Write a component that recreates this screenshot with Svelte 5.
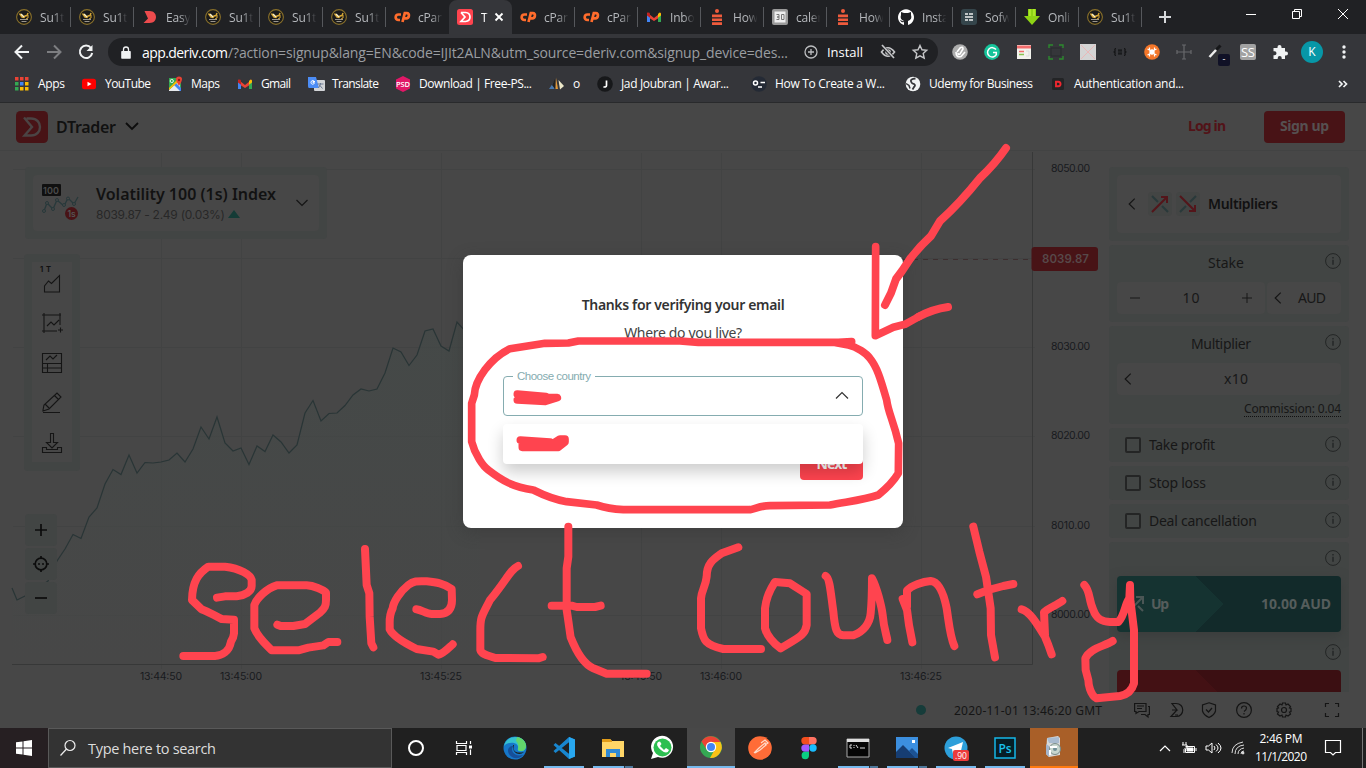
<script>
  // Spreads the letters of a label so that it runs exactly `width` pixels.
  function fit(node, width) {
    const natural = node.getBoundingClientRect().width;
    const count = node.textContent.trim().length;
    if (count > 1) node.style.letterSpacing = `${(width - natural) / (count - 1)}px`;
    node.style.width = `${width}px`;
  }

  const tabs = [
    ['coin', 'Su1t'], ['coin', 'Su1t'], ['easy', 'Easy'], ['coin', 'Su1t'], ['coin', 'Su1t'], ['coin', 'Su1t'],
    ['cp', 'cPan'], ['deriv', 'T'], ['cp', 'cPan'], ['cp', 'cPan'], ['gmail', 'Inbo'], ['how', 'How'],
    ['cal', 'caler'], ['how', 'How'], ['github', 'Insta'], ['sofw', 'Sofw'], ['down', 'Onli'], ['coin', 'Su1t']
  ];

  const bookmarks = [
    { icon: 'apps', text: 'Apps', w: 27, span: 67 },
    { icon: 'youtube', text: 'YouTube', w: 46, span: 86 },
    { icon: 'maps', text: 'Maps', w: 29, span: 70 },
    { icon: 'gmail', text: 'Gmail', w: 30, span: 71 },
    { icon: 'translate', text: 'Translate', w: 47, span: 87 },
    { icon: 'psd', text: 'Download | Free-PS...', w: 113, span: 154 },
    { icon: 'ai', text: 'o', w: 7, span: 48 },
    { icon: 'jad', text: 'Jad Joubran | Awar...', w: 108, span: 154 },
    { icon: 'face', text: 'How To Create a W...', w: 110, span: 154 },
    { icon: 'globe', text: 'Udemy for Business', w: 104, span: 145 },
    { icon: 'auth', text: 'Authentication and...', w: 110, span: 150 }
  ];

  const extensions = ['clip', 'grammar', 'news', 'frame', 'cross', 'braces', 'orange', 'ruler', 'pick', 'ss', 'puzzle'];

  const points = [
    [12, 588], [17, 600], [25, 596], [33, 592], [41, 586], [48, 581], [57, 561], [65, 549], [73, 534.5], [81, 538.5],
    [89, 517], [97, 508], [105, 484], [113, 469.5], [121, 474.5], [129, 455], [137, 473], [145, 462.5], [153, 463],
    [161, 462], [169, 460], [177, 453], [185, 462], [193, 449], [201, 427], [209, 439], [217, 417], [225, 443],
    [233, 451], [241, 448], [249, 464.5], [257, 446], [265, 451.5], [273, 435], [281, 442], [289, 453], [297, 445],
    [305, 413], [313, 400.5], [321, 421], [329, 413.5], [337, 413], [345, 405.5], [353, 395], [361, 389], [369, 391],
    [377, 389], [385, 373], [393, 348], [401, 352], [409, 365.5], [417, 355], [425, 331], [433, 329], [441, 346],
    [449, 351], [457, 322], [465, 331], [480, 340]
  ];
  const line = points.map(([x, y]) => `${x},${y - 103}`).join(' ');

  const priceLabels = [['8050.00', 66], ['8030.00', 244], ['8020.00', 333], ['8010.00', 423], ['8000.00', 512]];
  const timeLabels = [['13:44:50', 161], ['13:45:00', 241], ['13:45:25', 441], ['13:45:50', 641], ['13:46:00', 721], ['13:46:25', 921]];

  const options = [['Take profit', 66], ['Stop loss', 57], ['Deal cancellation', 108]];

  const apps = [
    ['edge', ''], ['vscode', 'run'], ['explorer', 'stacked'], ['whatsapp', ''], ['chrome', 'focused'], ['postman', ''],
    ['figma', ''], ['cmd', 'stacked'], ['photos', 'stacked'], ['telegram', 'run'], ['ps', 'run'], ['installer', 'alert']
  ];
</script>

{#snippet info()}
  <svg class="info" viewBox="0 0 16 16" width="16" height="16" fill="none" stroke="#232525">
    <circle cx="8" cy="8" r="7.4" /><path d="M8 6.8v5M8 4v1.5" stroke-width="1.4" />
  </svg>
{/snippet}

{#snippet left()}
  <svg width="8" height="12" viewBox="0 0 8 12" fill="none" stroke="#151515" stroke-width="1.2"><path d="M6.7.6 1.2 6l5.5 5.4" /></svg>
{/snippet}

{#snippet icon(name)}
  <svg viewBox="0 0 16 16" width="16" height="16" fill="none">
    {#if name === 'coin'}
      <circle cx="8" cy="8" r="7.4" fill="#1b1b1b" stroke="#89702a" stroke-width="1.1" />
      <path d="M3.500 4.500 6 8l2 .5 1-1.500 2-.5 1-2.500" stroke="#d7a735" stroke-width="1.500" /><path d="M4 10.500h8M5.500 12.500h5" stroke="#99958d" stroke-width="1.200" /><path d="m5 5 3 3" stroke="#fff2c5" stroke-width="1.500" /><path d="M12 6v3l-2 1" stroke="#d7a735" />
    {:else if name === 'easy'}
      <path d="M2.500 2h5C12 2 14 5 14 8s-2 6-6.500 6H1.500L6 9.500Z" fill="#ed4b4d" />
    {:else if name === 'cp'}
      <g stroke="#ff6c2c" stroke-width="2.700"><path d="M7 5.500H4.500C1 5.500 .500 11 4.500 11H6M8.500 13 10.800 4.200h2C16.300 4.200 15 9.400 12.500 9.400H10" /></g>
    {:else if name === 'deriv'}
      <rect width="16" height="16" rx="2.500" fill="#ff444f" /><path d="M4 3.500h4.500c6 .500 6 8.500 0 9H4L8 8 4 3.500" stroke="#fff" stroke-width="1.700" />
    {:else if name === 'gmail'}
      <path d="M1 3.500 8 9l7-5.500v4L8 12 1 7.500Z" fill="#ea4335" /><path d="M1 4.500V13h3V7Z" fill="#4285f4" /><path d="M15 4.500V13h-3V7Z" fill="#34a853" /><path d="m12 5 1.500-1.500q1.500 0 1.500 1.500v1.500l-3 2.300Z" fill="#fbbc04" /><path d="M1 5q0-2 2.500-1.200L4 4.500v4.300L1 6.500Z" fill="#c5221f" />
    {:else if name === 'how'}
      <circle cx="8" cy="2" r="2" fill="#ef5b3c" /><path d="M3 5.500h10v2.800H3zM3 9.400h10v2.700H3zM3 13.200h10V16H3z" fill="#ef5b3c" />
    {:else if name === 'cal'}
      <rect width="16" height="16" rx="2" fill="#9a9a9a" /><rect x="2.500" y="2.500" width="11" height="11" fill="#eee" /><path d="M4.500 5.500h2.500v2.500H5h2v2.500H4.500M9.500 5.500h2.500v5H9.500z" stroke="#777" />
    {:else if name === 'github'}
      <path d="M6 16v-3c-3 1-3-1-4-2 2 0 2 2 4 1-3-1-4-3-3-6V3l3 1h4l3-1v3c1 3 0 5-3 6v4a8 8 0 1 0-4 0Z" fill="#fff" />
    {:else if name === 'sofw'}
      <rect width="16" height="16" rx="3" fill="#35454b" /><path d="M4 5h3M8 5h4M4 8h8M4 11h3M8 11h4" stroke="#eee" stroke-width="1.400" />
    {:else if name === 'down'}
      <path d="M4 0h8v7h4l-8 9-8-9h4Z" fill="#8ed315" /><path d="M6 0v7M10 0v7" stroke="#cafa41" />
    {:else if name === 'apps'}
      {#each [1, 6, 11] as x, i}
        <path d="M{x} 1h3.500v3.500H{x}z" fill="#ea4335" /><path d="M{x} 6h3.500v3.500H{x}z" fill={['#34a853', '#4285f4', '#fbbc04'][i]} /><path d="M{x} 11h3.500v3.500H{x}z" fill={i === 0 ? '#34a853' : '#fbbc04'} />
      {/each}
    {:else if name === 'youtube'}
      <rect x="1" y="2.800" width="14" height="10.500" rx="2.500" fill="#f00" /><path d="m6.500 5.800 4 2.200-4 2.300Z" fill="#fff" />
    {:else if name === 'maps'}
      <path d="M2 2h12v13H2Z" fill="#34a853" /><path d="M2 14 13 4v11H2Z" fill="#e8eaed" /><path d="m7 9 2-2 5 5v3h-1Z" fill="#4285f4" /><path d="m2 12 8-8 2 1-10 9Z" fill="#fbbc04" /><circle cx="4.800" cy="5" r="1.600" stroke="#e8f5ec" /><path d="M12 10C8 4 8 .500 12 .500s4 3.500 0 9.500Z" fill="#ea4335" /><circle cx="12" cy="4" r="1.200" fill="#8c1c13" />
    {:else if name === 'translate'}
      <rect x="6" y="4" width="11" height="11" rx="1" fill="#d3d5d8" /><path d="M0 1h8l3 11H1Q0 12 0 10Z" fill="#4c8df6" /><path d="M7 5.500H5v1.200h1.500C6 9 3 8.500 3 6.500c0-2 2-2.500 3.300-1.300" stroke="#fff" /><path d="M9.500 8h6M12.500 7v1l-2 4M11.500 9l3 3.500" stroke="#6c7b93" />
    {:else if name === 'psd'}
      <path d="m8 0 7 3.500v9L8 16l-7-3.500v-9Z" fill="#e11767" /><text x="8" y="10.700" text-anchor="middle" font-family="Open Sans" font-weight="600" font-size="7.500" fill="#fff" textLength="14">PSD</text>
    {:else if name === 'ai'}
      <path d="M0 13 5.500 5v8Z" fill="#4978ad" /><path d="M6.500 13 7 1.500 9 13Z" fill="#e39a39" /><path d="m3 9 3-6v10Z" fill="#222" /><path d="m9.500 4 5.500 6-4 3.500Z" fill="#ece8c9" />
    {:else if name === 'jad'}
      <circle cx="8" cy="8" r="7.800" fill="#17181a" /><path d="M9.500 4.500v5q0 2-3 1.300" stroke="#fff" stroke-width="1.700" />
    {:else if name === 'face'}
      <circle cx="8" cy="8" r="7.800" fill="#242a35" /><circle cx="4.500" cy="7" r="2" stroke="#fff" stroke-width="1.500" /><path d="M9.500 6.500H14M7 11h4" stroke="#fff" stroke-width="1.600" />
    {:else if name === 'globe'}
      <circle cx="8" cy="8" r="7.300" fill="#f1f3f4" /><path d="M10.500 2.500Q5 3 6 5.500T9 8q2 1 0 3l-1.500 2.500" stroke="#35363a" stroke-width="1.800" /><path d="M1 7.500 4 9.500l1 3" stroke="#35363a" stroke-width="1.500" />
    {:else if name === 'auth'}
      <rect x="2" y="2" width="12" height="12" rx="1.500" fill="#232426" /><path d="M6 5.700h2.300C11.300 6 11.300 10 8.300 10.300H6Z" stroke="#ef2730" stroke-width="1.900" />
    {:else if name === 'clip'}
      <circle cx="8" cy="8" r="7.800" fill="#adadad" /><path d="m5 8 3-4q3-2 3 1L8 10q-2 1-2-1M4 8q0 6 5 4.500L13 8" stroke="#fff" stroke-width="1.600" />
    {:else if name === 'grammar'}
      <circle cx="8" cy="8" r="7.900" fill="#15c39a" /><path d="M12 5.500a4.700 4.700 0 1 0 .3 5.200V8.500H9" stroke="#fff" stroke-width="1.500" />
    {:else if name === 'news'}
      <path d="M1 1h14v14H1z" fill="#f3f3ed" /><path d="M1 3h14" stroke="#f36d6d" stroke-width="3" /><path d="M3 7.500h5" stroke="#f36d6d" stroke-width="1.500" /><path d="M3 10.500h5" stroke="#8ac450" stroke-width="1.500" /><path d="M10 7h3v5h-3" stroke="#ddd" />
    {:else if name === 'frame'}
      <path d="M1 4V1h4M11 1h4v3M1 12v3h4M11 15h4v-3" stroke="#2d8a2e" stroke-width="1.400" /><path d="M3 4h10v8H3z" stroke="#292b2c" />
    {:else if name === 'cross'}
      <path d="M0 0h16v16H0z" fill="#d4d4d4" /><path d="m1 1 14 14M15 1 1 15" stroke="#efb1b1" stroke-width=".8" />
    {:else if name === 'braces'}
      <path d="M4 4.500Q2.500 4.500 3 6.300T1.500 8Q3.500 8 3 9.700T4 11.500M12 4.500q1.500 0 1 1.800T14.500 8q-2 0-1.500 1.700t-1 1.800M6 6.200h4M6 8h4M6 9.800h4" stroke="#111213" stroke-width="1.200" />
    {:else if name === 'orange'}
      <circle cx="8" cy="8" r="7.800" fill="#f4772a" /><path d="m3.500 5 2 1 0-2.500M12.500 5l-2 1V3.500M3.500 11l2-1v2.500M12.500 11l-2-1v2.500" stroke="#fff" stroke-width="1.200" /><circle cx="8" cy="8" r="2.700" fill="#fff" />
    {:else if name === 'ruler'}
      <path d="M1 6v4M15 6v4M1 8h14M8 1v14M6 1h4M6 15h4" stroke="#68696c" stroke-width="1.200" />
    {:else if name === 'pick'}
      <path d="m1.500 13 6.500-7" stroke="#eee" stroke-width="2.500" /><path d="m8.500 5.500 4-4" stroke="#161719" stroke-width="3" />
    {:else if name === 'ss'}
      <rect width="16" height="16" rx="2" fill="#a2a2a2" /><text x="8" y="12.500" text-anchor="middle" font-family="Open Sans" font-size="13" fill="#fff" textLength="14">SS</text>
    {:else if name === 'puzzle'}
      <path d="M1.500 4h4V3a2 2 0 0 1 4 0v1h3.500v3.500h1a2 2 0 0 1 0 4h-1V15H9.700v-1a2 2 0 0 0-4 0v1H1.500v-3.700h1a2 2 0 0 0 0-4h-1Z" fill="#f1f3f4" />
    {/if}
  </svg>
{/snippet}

{#snippet app(name)}
  <svg viewBox="0 0 24 24" width="24" height="24" fill="none">
    {#if name === 'edge'}
      <circle cx="12" cy="12" r="11.500" fill="#1677c9" /><path d="M1 10C3-2 22-2 23 10c0 4-3 6-7 5-2-1-1-2-1-4 0-5-10-6-14-1Z" fill="#35c1d0" /><path d="M14 1c6 1 9 5 9 9 0 5-5 6-8 4 1-5 0-7-2-9Z" fill="#62d66b" /><path d="M10 10c-3 5 1 11 10 9-5 6-14 3-15-4 0-3 2-5 5-5Z" fill="#164f99" /><path d="M11 9c-2 6 2 9 10 7-4 4-12 2-11-7Z" fill="#1d2022" />
    {:else if name === 'vscode'}
      <path d="m17 1 6 2.500v17L17 23 1.500 9l2-2 15 12V5L3.500 17l-2-2Z" fill="#1886cf" /><path d="m17 1 6 2.500v17L17 23Z" fill="#28a7ef" />
    {:else if name === 'explorer'}
      <path d="M1 3h8l2 2h12v16H1Z" fill="#ffd667" /><path d="M1 3h8l2 2v1H1Z" fill="#e19c19" /><path d="M5 21v-8h14v8h-4v-4H9v4Z" fill="#318ad4" />
    {:else if name === 'whatsapp'}
      <path d="m1 23 2-6A11 11 0 1 1 8 21Z" fill="#fff" /><circle cx="12.500" cy="11.500" r="9" fill="#2cbf50" /><path d="M8 6q-3 3 3 8 6 5 8 0l-3-2-2 2-4-4 1.500-2L10 5.500Z" fill="#fff" />
    {:else if name === 'chrome'}
      <circle cx="12" cy="12" r="11" fill="#34a853" /><path d="M2.500 6.500A11 11 0 0 1 21.500 7H12L8 15Z" fill="#ea4335" /><path d="M21.500 7A11 11 0 0 1 11 23l5-9-3-7Z" fill="#fbc116" /><circle cx="12" cy="12" r="5.200" fill="#fff" /><circle cx="12" cy="12" r="4" fill="#4285f4" />
    {:else if name === 'postman'}
      <circle cx="12" cy="12" r="11.800" fill="#ff6c37" /><path d="m6 17 5-5 6-5 1 2-6 5-5 3M13 7l4-3 3 3-3 2" stroke="#ffdac9" stroke-width="1.200" />
    {:else if name === 'figma'}
      <path d="M12 1H8a3.700 3.700 0 0 0 0 7.400h4Z" fill="#f24e1e" /><path d="M12 1h4a3.700 3.700 0 0 1 0 7.400h-4Z" fill="#ff7262" /><path d="M12 8.400H8a3.700 3.700 0 0 0 0 7.400h4Z" fill="#a259ff" /><circle cx="16" cy="12" r="3.700" fill="#1abcfe" /><path d="M12 15.800H8a3.700 3.700 0 1 0 4 3.700Z" fill="#0acf83" />
    {:else if name === 'cmd'}
      <path d="M1 3h22v18H1z" fill="#050505" stroke="#aaa" /><path d="M1 4.500h22" stroke="#ddd" stroke-width="3" /><path d="M6 9H4v3h2M8 9v1M8 11v1M10 9l2 3M14 12h5" stroke="#ddd" />
    {:else if name === 'photos'}
      <path d="M1 1h22v21H1z" fill="#3c8fdf" /><path d="m1 16 7-7 13 13H1Z" fill="#163d72" /><path d="m14 15 3-3 6 6v4h-3Z" fill="#1c5292" /><path d="M17 4h3v3h-3z" fill="#fff" />
    {:else if name === 'telegram'}
      <circle cx="12" cy="12" r="11.500" fill="#2d9fda" /><path d="m4 12 15-6-3 13-5-4-2 3-1-5Z" fill="#fff" />
      <rect x="9" y="14" width="16" height="11" rx="2" fill="#ed3b3b" /><text x="17" y="22.500" text-anchor="middle" font-family="Open Sans" font-size="8.500" fill="#fff">.90</text>
    {:else if name === 'ps'}
      <path d="M2 2h20v20H2z" fill="#061e26" stroke="#14b7e7" stroke-width="1.500" /><text x="12" y="16.500" text-anchor="middle" font-family="Open Sans" font-weight="600" font-size="12" fill="#19c3ee" textLength="13">Ps</text>
    {:else if name === 'installer'}
      <path d="m5 3 11-2 2 2v17l-11 2-3-3Z" fill="#d8d9d8" /><path d="M5 3 17 2v6H7Z" fill="#a9bbcf" /><path d="m4 9 3 2v11l-3-3Z" fill="#a4b5cb" /><circle cx="13" cy="14" r="5.500" fill="#c8d7cf" stroke="#798c8a" /><circle cx="13" cy="14" r="2" fill="#718f97" /><path d="M8 12h7M8 15v5" stroke="#fff" stroke-width="2" />
    {/if}
  </svg>
{/snippet}

<div class="screen">
  <div class="tabs">
    {#each tabs as [name, text], i}
      <div class="tab" class:active={i === 7} class:bare={i === 6 || i === 7}>
        {@render icon(name)}
        <span class="tabtext">{text}</span>
        {#if i === 7}<svg class="x" width="10" height="10" stroke="#fff" stroke-width="1.800"><path d="m1.500 1.500 7 7M8.500 1.500l-7 7" /></svg>{/if}
      </div>
    {/each}
    <svg class="plus" width="14" height="14" stroke="#d5d7da" stroke-width="2"><path d="M7 1v12M1 7h12" /></svg>
    <div class="winbtns">
      <svg width="12" height="12" stroke="#fff" fill="none"><path d="M1 6.500h10" /></svg>
      <svg width="12" height="12" stroke="#fff" fill="none"><path d="M1.500 3.500h7v7h-7zM3.500 3.500v-2h7v7h-2" /></svg>
      <svg width="12" height="12" stroke="#fff" fill="none"><path d="m1 1 10 10M11 1 1 11" /></svg>
    </div>
  </div>

  <div class="toolbar">
    <div class="nav">
      <svg width="16" height="16" fill="none" stroke="#f1f3f4" stroke-width="2"><path d="M15 8H2M8 1.500 1.500 8 8 14.500" /></svg>
      <svg width="16" height="16" fill="none" stroke="#7d7e81" stroke-width="2"><path d="M1 8h13M8 1.500 14.500 8 8 14.500" /></svg>
      <svg width="16" height="16" fill="none" stroke="#f1f3f4" stroke-width="2"><path d="M13 4a6.200 6.200 0 1 0 1.200 5" /><path d="M14.500 1v6h-6Z" fill="#f1f3f4" stroke="none" /></svg>
    </div>
    <div class="url">
      <svg width="10" height="13" fill="#f1f3f4"><path d="M1 5h8q.8 0 .8.800V12q0 .8-.8.800H1q-.8 0-.8-.800V5.800Q.2 5 1 5Z" /><path d="M2.500 5V3.500a2.500 2.500 0 0 1 5 0V5" fill="none" stroke="#f1f3f4" stroke-width="1.300" /></svg>
      <span class="host" use:fit={86}>app.deriv.com</span><span class="path" use:fit={560}>/?action=signup&amp;lang=EN&amp;code=IJIt2ALN&amp;utm_source=deriv.com&amp;signup_device=des...</span>
      <svg class="inst" width="14" height="14" fill="none" stroke="#bcbec0" stroke-width="1.300"><circle cx="7" cy="7" r="6" /><path d="M7 4v6M4 7h6" /></svg>
      <span class="install" use:fit={36}>Install</span>
      <svg class="eye" width="16" height="14" fill="none" stroke="#c5c6c8" stroke-width="1.700"><path d="M1.500 7q6.500-8.500 13 0-6.500 8.500-13 0Z" /><circle cx="8" cy="7" r="2" fill="#c5c6c8" /><path d="m2 1 12 12" stroke="#202124" stroke-width="3" /><path d="m2 0 12 13" /></svg>
      <svg class="star" width="16" height="16" fill="none" stroke="#c5c6c8" stroke-width="1.400"><path d="m8 1.500 2 4.300 4.700.5-3.500 3.200 1 4.700L8 11.800l-4.200 2.400 1-4.700L1.300 6.300l4.700-.5Z" /></svg>
    </div>
    <div class="exts">
      {#each extensions as name}
        <div class="ext">{@render icon(name)}{#if name === 'pick'}<i class="badge">-</i>{/if}</div>
      {/each}
      <div class="ext"><span class="avatar">K</span></div>
      <div class="ext"><svg width="4" height="16" fill="#f1f3f4"><circle cx="2" cy="3" r="1.700" /><circle cx="2" cy="8" r="1.700" /><circle cx="2" cy="13" r="1.700" /></svg></div>
    </div>
  </div>

  <div class="bookmarks">
    {#each bookmarks as b}
      <div class="bm" style="width: {b.span}px">{@render icon(b.icon)}<span use:fit={b.w}>{b.text}</span></div>
    {/each}
    <svg class="more" width="10" height="8" fill="none" stroke="#f1f3f4" stroke-width="1.700"><path d="m1 1 3 3-3 3M5.500 1l3 3-3 3" /></svg>
  </div>

  <main>
    <header>
      <svg width="32" height="32" fill="none"><rect width="32" height="32" rx="4.500" fill="#481316" /><path d="M10.500 7.500H15c12 0 12 17 0 17H8.500l7.500-8.500L8 6.500" stroke="#4b4444" stroke-width="2.400" /></svg>
      <b class="brand" use:fit={60}>DTrader</b>
      <svg class="chev" width="14" height="9" fill="none" stroke="#0d0d0d" stroke-width="1.800"><path d="m1 1 6 6 6-6" /></svg>
      <b class="login" use:fit={38}>Log in</b>
      <div class="signup"><b use:fit={49}>Sign up</b></div>
    </header>

    <svg class="plot" width="1100" height="590" viewBox="0 0 1100 590">
      <defs><linearGradient id="area" x2="0" y2="1"><stop stop-color="#434a48" /><stop offset="1" stop-color="#474747" /></linearGradient></defs>
      <g stroke="#424343">
        {#each [66.500, 155.500, 244.500, 333.500, 423.500, 512.500] as y}<path d="M13 {y}H1035" />{/each}
        {#each timeLabels as [, x]}<path d="M{x + 0.500} 50V566" />{/each}
      </g>
      <polygon points="{line} 480,561 12,561" fill="url(#area)" opacity=".6" />
      <polyline points={line} fill="none" stroke="#293536" stroke-width="1.200" />
      <path d="M12 561.500H1032.500V49" fill="none" stroke="#373838" />
      <path d="M893 156.500H1032" stroke="#3d2e2f" stroke-dasharray="5 5" />
      <rect x="1031.500" y="144" width="66.500" height="24" rx="3" fill="#481316" />
      <g class="axis">
        {#each priceLabels as [t, y]}<text x="1051" y={y + 3} textLength="39">{t}</text>{/each}
        {#each timeLabels as [t, x]}<text x={x - 21} y="577" textLength="42">{t}</text>{/each}
        <text class="now" x="1042" y="160" textLength="47">8039.87</text>
      </g>
    </svg>

    <div class="market">
      <div class="marketcard">
        <svg width="40" height="40" fill="none">
          <rect width="19" height="12" x="1" y="1" rx="1" fill="#101010" /><text x="2" y="10.500" font-family="Inter" font-size="9" font-weight="600" fill="#4c4c4c" textLength="16">100</text>
          <path d="m3 28 3-8 6 6 4-9 7 6 4-8 6 6 4-7" stroke="#28393b" stroke-width="1.300" />
          <g fill="#474747" stroke="#28393b"><circle cx="3" cy="28" r="1.500" /><circle cx="6" cy="20" r="1.500" /><circle cx="12" cy="26" r="1.500" /><circle cx="16" cy="17" r="1.500" /><circle cx="23" cy="22" r="1.500" /><circle cx="27" cy="15.500" r="1.500" /><circle cx="33" cy="21" r="1.500" /></g>
          <circle cx="30.500" cy="30.500" r="6.500" fill="#481316" /><text x="26.500" y="33.800" font-family="Inter" font-size="8.500" font-weight="600" fill="#555">1s</text>
        </svg>
        <div class="mtext"><b use:fit={180}>Volatility 100 (1s) Index</b><div class="sub"><span use:fit={129}>8039.87 - 2.49 (0.03%)</span><i></i></div></div>
        <svg width="12" height="8" fill="none" stroke="#151515" stroke-width="1.200"><path d="m.5 1 5.500 5.500L11.500 1" /></svg>
      </div>
    </div>

    <div class="tools">
      <div class="toolcard">
        <svg viewBox="0 0 22 28" width="22" height="28"><text x="0" y="7" font-family="Inter" font-size="7.500" font-weight="700" fill="#111" textLength="11">1 T</text><path d="M4.500 27V21l4-5 3 2.500 8-8V27Z" /></svg>
        <svg width="22" height="22"><path d="M1 3h19M3 1v20M1 19h15M19 1v12M6 14l4-4 3 3 5-5M17 18h5M19.500 15.500v5" /></svg>
        <svg width="22" height="22"><path d="M1.500 1.500h19v19h-19zM1.500 11.500h19M1.500 16h19M6.500 12v8M5 8l4-4 3 3 4-4" /></svg>
        <svg width="22" height="22"><path d="M2 20.500h17M2 18l1-5L16 1l4 4L8 17l-6 2ZM13.500 3.500l4 4M4 12l4 4" /></svg>
        <svg width="22" height="22"><path d="M9.500 1.500h3v9h4L11 16l-5.500-5.500h4ZM1.500 15.500h4v2h11v-2h4v5h-19Z" /></svg>
      </div>
    </div>

    <div class="zooms">
      <div><svg width="14" height="14"><path d="M7 1v12M1 7h12" /></svg></div>
      <div><svg width="16" height="16"><circle cx="8" cy="8" r="5.800" /><path d="M8 0v3M8 13v3M0 8h3M13 8h3M5 8h2M9 8h2" /></svg></div>
      <div><svg width="14" height="14"><path d="M1 7h12" /></svg></div>
    </div>

    <aside>
      <section class="s1"><div class="card trade">
        {@render left()}
        <svg class="mx first" width="24" height="24" fill="none" stroke-width="2"><path d="m4 4 6 6M14 14l6 6" stroke="#29393a" /><path d="M4 20 18 6M13 5h6v6" stroke="#53151a" /></svg>
        <svg class="mx" width="24" height="24" fill="none" stroke-width="2"><path d="m20 4-6 6M10 14l-6 6" stroke="#29393a" /><path d="m4 4 14 14M13 19h6v-6" stroke="#53151a" /></svg>
        <b use:fit={70}>Multipliers</b>
      </div></section>
      <section class="s2">
        <div class="label"><span use:fit={36}>Stake</span>{@render info()}</div>
        <div class="row"><div class="card stake"><svg width="12" height="12" stroke="#181818"><path d="M1 6h10" /></svg><span use:fit={17}>10</span><svg width="12" height="12" stroke="#181818"><path d="M1 6h10M6 1v10" /></svg></div><div class="card cur">{@render left()}<span use:fit={28}>AUD</span></div></div>
      </section>
      <section class="s3">
        <div class="label"><span class="ml" use:fit={60}>Multiplier</span>{@render info()}</div>
        <div class="card times">{@render left()}<span use:fit={24}>x10</span></div>
        <div class="comm"><span use:fit={97}>Commission: 0.04</span></div>
      </section>
      {#each options as [t, w]}<section class="opt"><i></i><span use:fit={w}>{t}</span>{@render info()}</section>{/each}
      <section class="buy">
        <div class="ir">{@render info()}</div>
        <div class="btn up"><svg width="18" height="18" fill="none" stroke="#4b5655" stroke-width="2"><path d="m2 2 5 5M11 11l5 5M2 16 15 3M9 2h7v7" /></svg><b use:fit={18}>Up</b><b class="amt" use:fit={70}>10.00 AUD</b></div>
        <div class="ir two">{@render info()}</div>
        <div class="btn down"><svg width="18" height="18" fill="none" stroke="#554747" stroke-width="2"><path d="m16 2-5 5M2 2l13 13" /></svg></div>
      </section>
    </aside>

    <footer>
      <i class="dot"></i><span class="date" use:fit={148}>2020-11-01 13:46:20 GMT</span>
      <svg class="f1" width="16" height="16"><path d="M1 1.500h11v8H5l-3 2v-2H.6v-8ZM3 4h7M3 6.500h5M14 4.500h1.400v8H14v2.500l-3-2.500H7" /></svg>
      <svg class="f2" width="14" height="16"><path d="M2 1.500h4c9 0 9 13 0 13H1l6-6.500Z M3 3l4 5h-5M5 13h3" /></svg>
      <svg class="f3" width="16" height="16"><path d="M8 .8 14.500 3v6q-1 4-6.500 6.500Q2.500 13 1.500 9V3Z" /><path d="m5 7.500 2.500 2.500L11 6" /></svg>
      <svg class="f4" width="16" height="16"><circle cx="8" cy="8" r="7.400" /><path d="M5.500 6.500q0-2.500 2.500-2.500t2.500 2T8 9.500M8 11v1.500" /></svg>
      <svg class="f5" width="16" height="16"><path d="m6.500 1h3l.5 2 2-1 2.500 2.500-1 1.500 1.500.5v3l-1.500.5 1 2L12 14l-2-1-.5 2h-3L6 13l-2 1-2.500-2 1-2L1 9.500v-3L2.500 6l-1-1.500L4 2l2 1Z" /><circle cx="8" cy="8" r="2.500" /></svg>
      <svg class="f6" width="16" height="16"><path d="M1.500 5V1.500H5M11 1.500h3.500V5M1.500 11v3.500H5M11 14.500h3.500V11" /></svg>
    </footer>

    <div class="modal">
      <h1><span use:fit={203}>Thanks for verifying your email</span></h1>
      <p><span use:fit={118}>Where do you live?</span></p>
      <div class="field">
        <span class="legend"><span use:fit={74}>Choose country</span></span>
        <svg width="14" height="9" fill="none" stroke="#333" stroke-width="1.200"><path d="m1 7.500 6-6 6 6" /></svg>
      </div>
      <div class="next"><b use:fit={31}>Next</b></div>
      <div class="list"></div>
    </div>
  </main>

  <div class="taskbar">
    <div class="start"><svg width="16" height="16" fill="#fff"><path d="M0 2.300 6.500 1.400V7.500H0ZM7.500 1.200 16 0v7.500H7.500ZM0 8.500h6.500v6.100L0 13.700ZM7.500 8.500H16V16l-8.500-1.200Z" /></svg></div>
    <div class="search"><svg width="18" height="18" fill="none" stroke="#eee" stroke-width="1.200"><circle cx="11" cy="6.500" r="5" /><path d="M7.500 10 1.500 16.500" /></svg><span use:fit={128}>Type here to search</span></div>
    <div class="sys"><svg width="18" height="18" fill="none" stroke="#fff" stroke-width="2"><circle cx="9" cy="9" r="7" /></svg></div>
    <div class="sys"><svg width="18" height="18" fill="none" stroke="#fff" stroke-width="1.200"><path d="M1.500 2v2.500h10V2M1.500 16v-2.500h10V16M2 6.500h9v5H2zM15.500 2v3M15.500 10.500V16" /><path d="M14 6.500h3v3h-3z" fill="#fff" stroke="none" /></svg></div>
    <div class="apps">
      {#each apps as [name, state]}<div class="app {state}">{@render app(name)}</div>{/each}
    </div>
    <div class="tray">
      <svg class="t1" width="12" height="8" fill="none" stroke="#fff" stroke-width="1.200"><path d="m1 7 5-5 5 5" /></svg>
      <svg class="t2" width="16" height="14" fill="none" stroke="#fff"><path d="M4.500 5.500h9v6h-9V8M15 7v3M2 1v3M5 1v3M1 4h5v3H4.500L3 8.500V12" /><path d="M6 7h6v3H6z" fill="#fff" /></svg>
      <svg class="t3" width="17" height="14" fill="none" stroke="#fff"><path d="M1 5h2.500L7 2v10L3.500 9H1ZM9 5q2 2 0 4M11 3.500q4 3.500 0 7M13 2q6 5 0 10" /></svg>
      <svg class="t4" width="14" height="14" fill="none" stroke="#ddd"><path d="M1 12Q1 3 12 1M4 13Q4 5 13 4M7 13q0-5 6-6M10 13q0-3 3-3" /><circle cx="12" cy="12" r="1" fill="#fff" /></svg>
      <div class="clock"><span use:fit={43}>2:46 PM</span><span use:fit={52}>11/1/2020</span></div>
      <svg class="t5" width="18" height="18" fill="none" stroke="#fff" stroke-width="1.200"><path d="M1.500 1.500h15v12h-5L9 16l-2.500-2.500h-5Z" /></svg>
      <i></i>
    </div>
  </div>

  <svg class="ink" width="1366" height="768" fill="none" stroke="#ff444f" stroke-linecap="round" stroke-linejoin="round">
    <g transform="translate(160 520) scale(.33333)" stroke-width="24">
      <path d="M171 233L195 229H230C255 226 275 214 275 198V180C272 164 240 145 195 140H145C115 160 97 185 96 240L125 268C145 274 165 288 185 297L222 299V340C221 350 218 358 213 365C208 395 185 407 165 408H70" />
      <path d="M352 314L362 318H400L435 312L480 278C495 264 498 258 498 240V218C490 209 460 197 440 196H350C320 205 290 235 283 255V325C295 355 320 375 335 391H415L445 383L490 376L505 366H532" />
      <path d="M615 87L620 195L628 220L629 290L634 370L640 382" />
      <path d="M769 268C785 270 800 282 815 282H840C868 280 876 262 876 240L875 207C850 190 830 187 800 184C770 183 760 183 745 195C720 215 700 245 698 265C685 290 690 300 689 328C700 350 745 375 770 387L820 395L835 404C850 402 865 385 878 373" />
      <path d="M1074 138C1050 150 1040 180 990 240C965 290 961 290 961 330V390C965 405 990 407 1005 414L1135 415L1148 411" />
      <path d="M1225 20V110L1220 145V270C1225 300 1230 340 1232 352C1245 385 1265 430 1300 445L1340 461H1460M1175 257H1235L1250 261H1305L1322 257" />
    </g>
    <g transform="translate(660 520) scale(.33333)" stroke-width="24">
      <path d="M235 82L185 100C160 118 140 130 140 170C137 200 125 210 123 235V325C130 360 135 375 190 387H303" />
      <path d="M345 186L390 190L440 222V315C435 345 420 350 362 385C340 370 320 345 315 325V265C320 220 340 195 345 186Z" />
      <path d="M497 168C510 175 512 220 520 275C525 330 530 345 550 346H580C610 335 630 310 632 280C636 240 636 190 636 175C650 200 665 260 668 285C672 330 680 345 682 360" />
      <path d="M728 237L741 270L747 315L757 367M741 260V212C755 195 790 185 812 183C835 185 850 215 860 265C867 310 870 350 883 378" />
      <path d="M940 20L958 95L978 170L992 265L993 345L1005 412M952 223L985 210L1030 198L1060 192" />
      <path d="M1085 268C1110 275 1130 310 1155 350L1165 375L1175 403M1155 345L1152 277C1160 268 1190 255 1207 243" />
      <path d="M1273 195C1292 215 1285 240 1300 270C1310 300 1330 305 1350 306H1375C1395 285 1395 250 1408 235L1410 195L1411 240L1422 330V490C1415 515 1395 525 1380 528L1310 535C1290 525 1285 490 1285 480L1277 450L1276 415C1290 385 1330 380 1358 363" />
    </g>
    <g transform="translate(450 240) scale(.33333)" stroke-width="23">
      <path d="M1205 305L1165 307H745L690 303H385L355 309L285 310L180 326C120 355 75 420 73 465L65 490V605C75 645 100 680 115 690C160 725 190 740 250 750C290 770 320 780 350 785L440 795C470 805 500 808 520 809H900C920 805 930 797 960 797L1140 795C1190 785 1240 780 1285 765C1310 745 1330 725 1345 700L1346 610C1330 540 1315 520 1310 480C1290 410 1280 380 1260 355C1250 340 1220 320 1195 315L1150 307" />
      <path d="M1277 20L1276 287L1330 262L1365 253L1410 228" />
      <path d="M202 462L288 470 202 480 286 484 322 473H285" />
      <path d="M211 600L300 606H217L217 622H325L345 606V597H330L310 610 250 617" />
    </g>
    <path stroke-width="8" d="M1006 148Q995 164 980 178Q960 203 940 221L931 236Q919 247 910 259L902 271L896 279L891 293L885 305M918 317Q933 309 948 307" />
  </svg>
</div>

<style>
  :global(body) { background: #474747; overflow: hidden; }
  * { box-sizing: border-box; }
  .screen { position: relative; width: 1366px; height: 768px; display: flex; flex-direction: column; overflow: hidden; font-family: 'Open Sans', sans-serif; font-size: 12px; }
  span, b { display: inline-block; white-space: nowrap; flex: none; }
  svg { display: block; flex: none; overflow: visible; }

  .tabs { height: 34px; flex: none; background: #202124; display: flex; align-items: center; padding-left: 8px; }
  .tab { width: 63px; height: 34px; display: flex; align-items: center; padding-left: 8px; gap: 8px; position: relative; flex: none; }
  .tab::after { content: ''; position: absolute; right: 0; top: 7px; height: 20px; border-right: 1px solid #56585c; }
  .bare::after { display: none; }
  .tabtext { width: 25px; overflow: hidden; color: #b5b8bc; letter-spacing: -0.2px; -webkit-mask: linear-gradient(90deg, #000 55%, transparent 98%); }
  .active { background: #35363a; border-radius: 8px 8px 0 0; }
  .active .tabtext { width: 8px; color: #fff; }
  .x { margin-left: -3px; }
  .plus { margin-left: 16px; }
  .winbtns { margin-left: auto; display: flex; gap: 34px; padding-right: 17px; margin-top: -6px; }

  .toolbar { height: 36px; flex: none; background: #35363a; display: flex; align-items: center; }
  .nav { width: 108px; display: flex; padding-left: 14px; gap: 16px; }
  .url { width: 830px; height: 28px; border-radius: 14px; background: #202124; display: flex; align-items: center; padding-left: 13px; font-size: 14px; }
  .host { margin-left: 11px; color: #fff; }
  .path { color: #9a9da1; }
  .inst { margin-left: 16px; }
  .install { margin-left: 9px; font-size: 13px; color: #fff; }
  .eye { margin-left: 17px; }
  .star { margin-left: 16px; }
  .exts { display: flex; margin-left: 6px; }
  .ext { width: 32px; height: 24px; display: flex; align-items: center; justify-content: center; position: relative; }
  .badge { position: absolute; left: 18px; top: 14px; width: 12px; height: 12px; border-radius: 2px; background: #101126; color: #fff; font: 9px/10px 'Open Sans'; text-align: center; }
  .avatar { width: 22px; height: 22px; border-radius: 50%; background: #0797a7; color: #fff; text-align: center; line-height: 22px; font-size: 12px; }
  .bookmarks { height: 33px; flex: none; background: #35363a; border-bottom: 1px solid #292a2c; display: flex; align-items: center; padding: 0 18px 5px 14px; color: #fff; }
  .bm { display: flex; gap: 8px; align-items: center; flex: none; }
  .more { margin-left: auto; }

  main { position: relative; height: 625px; flex: none; background: #474747; color: #171717; display: flex; flex-direction: column; font-family: 'Noto Sans', sans-serif; font-size: 14px; }
  header { height: 48px; flex: none; border-bottom: 1px solid #424343; display: flex; align-items: center; padding: 0 21px 0 16px; }
  .brand { margin-left: 8px; font-size: 16px; font-weight: 600; color: #111; }
  .chev { margin-left: 9px; }
  .login { margin-left: auto; color: #521318; font-weight: 700; padding-bottom: 2px; }
  .signup { margin-left: 38px; width: 81px; height: 32px; border-radius: 4px; background: #481316; color: #565051; display: flex; align-items: center; justify-content: center; padding-bottom: 2px; }
  .plot { position: absolute; left: 0; top: 0; }
  .axis { font: 10.500px Inter, sans-serif; fill: #181a1e; }
  .axis .now { font-size: 11.500px; font-weight: 600; fill: #57494a; }

  .market { position: absolute; left: 25px; top: 64px; width: 302px; height: 72px; background: #424544; border-radius: 4px; padding: 8px; }
  .marketcard { height: 56px; border-radius: 4px; background: #474747; display: flex; align-items: center; padding: 0 11px 0 8px; }
  .mtext { margin-left: 15px; width: 200px; display: flex; flex-direction: column; align-items: flex-start; gap: 1px; }
  .mtext b { font-size: 16px; line-height: 21px; color: #121212; font-weight: 600; }
  .sub { display: flex; align-items: center; gap: 3px; font: 12px/17px Inter, sans-serif; color: #282828; }
  .sub i { border: 6px solid transparent; border-top: 0; border-bottom: 8px solid #143b36; }
  .tools { position: absolute; left: 24px; top: 151px; width: 56px; height: 217px; background: #424544; border-radius: 4px; padding: 8px; }
  .toolcard { height: 200px; background: #474747; display: flex; flex-direction: column; align-items: center; padding-top: 3px; gap: 18px; }
  .toolcard svg { fill: none; stroke: #151515; stroke-width: 1.100; }
  .toolcard svg:first-child { margin-bottom: 1px; margin-left: -3px; }
  .toolcard text { fill: #111; stroke: none; }
  .zooms { position: absolute; left: 25px; top: 411px; display: flex; flex-direction: column; gap: 2px; }
  .zooms div { width: 32px; height: 32px; border-radius: 4px; background: #424544; display: flex; align-items: center; justify-content: center; }
  .zooms svg { fill: none; stroke: #0c0c0c; stroke-width: 1.700; }

  aside { width: 240px; height: 525px; margin: 16px 0 0 1109px; overflow: hidden; display: flex; flex-direction: column; gap: 4px; flex: none; z-index: 1; }
  section { background: #424544; border-radius: 4px; flex: none; padding: 8px; position: relative; }
  section span, section b { padding-bottom: 2px; }
  .card { background: #474747; border-radius: 4px; display: flex; align-items: center; }
  .s1 { height: 74px; }
  .trade { height: 58px; padding-left: 11px; }
  .mx { background: #434544; border-radius: 4px; }
  .first { margin: 0 4px 0 12px; }
  .trade b { margin-left: 8px; font-weight: 600; color: #111; }
  .s2 { height: 77px; }
  .label { display: flex; justify-content: center; align-items: center; height: 21px; padding-right: 6px; position: relative; }
  .label .ml { margin-left: -10px; }
  .label :global(.info) { position: absolute; right: 0; top: 0; }
  .row { display: flex; gap: 2px; margin-top: 8px; }
  .stake { width: 148px; height: 32px; padding: 0 12px; justify-content: space-between; }
  .cur { width: 74px; padding-left: 7px; gap: 16px; }
  .s3 { height: 98px; }
  .times { height: 32px; margin-top: 8px; padding-left: 7px; gap: 92px; }
  .comm { text-align: right; font-size: 12px; line-height: 15px; margin-top: 6px; height: 16px; }
  .comm span { border-bottom: 1px dotted #111; text-align: left; height: 16px; padding: 0; }
  .opt { height: 34px; display: flex; align-items: center; padding: 0 8px 0 16px; }
  .opt i { width: 16px; height: 16px; border: 2px solid #242525; border-radius: 2px; margin-right: 8px; }
  .opt :global(.info) { margin-left: auto; margin-top: -2px; }
  .buy { height: 160px; padding-top: 8px; }
  .ir { display: flex; justify-content: flex-end; height: 26px; }
  .two { padding-top: 12px; height: 38px; }
  .btn { height: 56px; border-radius: 4px; display: flex; align-items: center; padding: 0 10px; color: #555d5c; gap: 6px; }
  .up { background: linear-gradient(#153331, #153331) 0 0 / 79px 100% no-repeat, linear-gradient(to top right, #153331 49.500%, transparent 50%) 79px 100% / 28px 28px no-repeat, linear-gradient(to bottom right, #153331 49.500%, transparent 50%) 79px 100% / 28px 28px no-repeat, #122a2a; background-position: 0 0, 79px 0, 79px 28px; box-shadow: 0 4px 12px #3a3d3c; }
  .down { background: linear-gradient(to top right, #431114 49.500%, #3b0f12 50%) 79px 0 / 28px 28px no-repeat, linear-gradient(90deg, #431114 79px, #3b0f12 79px); }
  .down svg { margin-top: 8px; }
  .amt { margin-left: auto; }

  footer { height: 36px; flex: none; display: flex; align-items: center; padding-left: 916px; font-size: 12px; color: #151515; }
  footer svg { fill: none; stroke: #151515; stroke-width: 1.200; }
  .dot { width: 10px; height: 10px; border-radius: 50%; background: #163c3a; margin-right: 28px; }
  .f1 { margin-left: 32px; } .f2 { margin-left: 20px; } .f3 { margin-left: 17px; } .f4 { margin-left: 19px; } .f5 { margin-left: 24px; } .f6 { margin-left: 32px; }

  .modal { position: absolute; z-index: 2; left: 463px; top: 152px; width: 440px; height: 273px; border-radius: 8px; background: #fff; box-shadow: 0 4px 16px #3336; padding: 39px 40px 40px; }
  h1 { margin: 0; font-size: 14px; line-height: 21px; font-weight: 600; text-align: center; color: #333; }
  p { margin: 7px 0 0; font-size: 14px; line-height: 21px; text-align: center; color: #444; }
  .field { height: 40px; margin-top: 33px; border: 1px solid #85acb0; border-radius: 4px; position: relative; display: flex; align-items: center; justify-content: flex-end; padding: 0 13px 2px; }
  .legend { position: absolute; left: 9px; top: -8px; background: #fff; padding: 0 4px; font: 11.500px/14px 'Liberation Sans', sans-serif; color: #85acb0; }
  .next { position: absolute; right: 40px; top: 193px; width: 63px; height: 32px; border-radius: 4px; background: #ff444f; color: #fff; text-align: center; line-height: 32px; }
  .list { position: absolute; left: 40px; top: 169px; width: 360px; height: 40px; background: #fff; border-radius: 4px; box-shadow: 0 8px 16px #0003; }

  .taskbar { height: 40px; flex: none; background: #202020; display: flex; align-items: stretch; color: #fff; }
  .start { width: 48px; background: #261f22; display: flex; align-items: center; justify-content: center; }
  .search { width: 344px; border: 1px solid #595959; background: #333; display: flex; align-items: center; padding-left: 10px; gap: 11px; font-size: 14.500px; color: #ddd; }
  .sys { width: 48px; display: flex; align-items: center; justify-content: center; }
  .apps { display: flex; margin-left: 3px; gap: 1px; }
  .app { width: 48px; display: flex; align-items: center; justify-content: center; position: relative; }
  .run::after, .stacked::after { content: ''; position: absolute; left: 4px; right: 4px; bottom: 0; height: 2px; background: #76b9ed; }
  .stacked::after { background: linear-gradient(90deg, #76b9ed 31px, #27303a 31px 32px, #4e789b 32px); }
  .focused { background: #484848; border-bottom: 2px solid #76b9ed; }
  .alert { background: #a95f28; border-bottom: 2px solid #ff7a0f; }
  .tray { margin-left: auto; width: 207px; display: flex; align-items: center; position: relative; }
  .t2 { margin-left: 10px; } .t3 { margin-left: 8px; } .t4 { margin-left: 9px; } .t5 { margin-left: 17px; }
  .clock { display: flex; flex-direction: column; align-items: center; width: 52px; margin-left: 10px; line-height: 18px; font-size: 12px; }
  .tray i { margin-left: auto; margin-right: 3px; height: 40px; border-left: 1px solid #777; }
  .ink { position: absolute; left: 0; top: 0; z-index: 5; pointer-events: none; }
</style>
